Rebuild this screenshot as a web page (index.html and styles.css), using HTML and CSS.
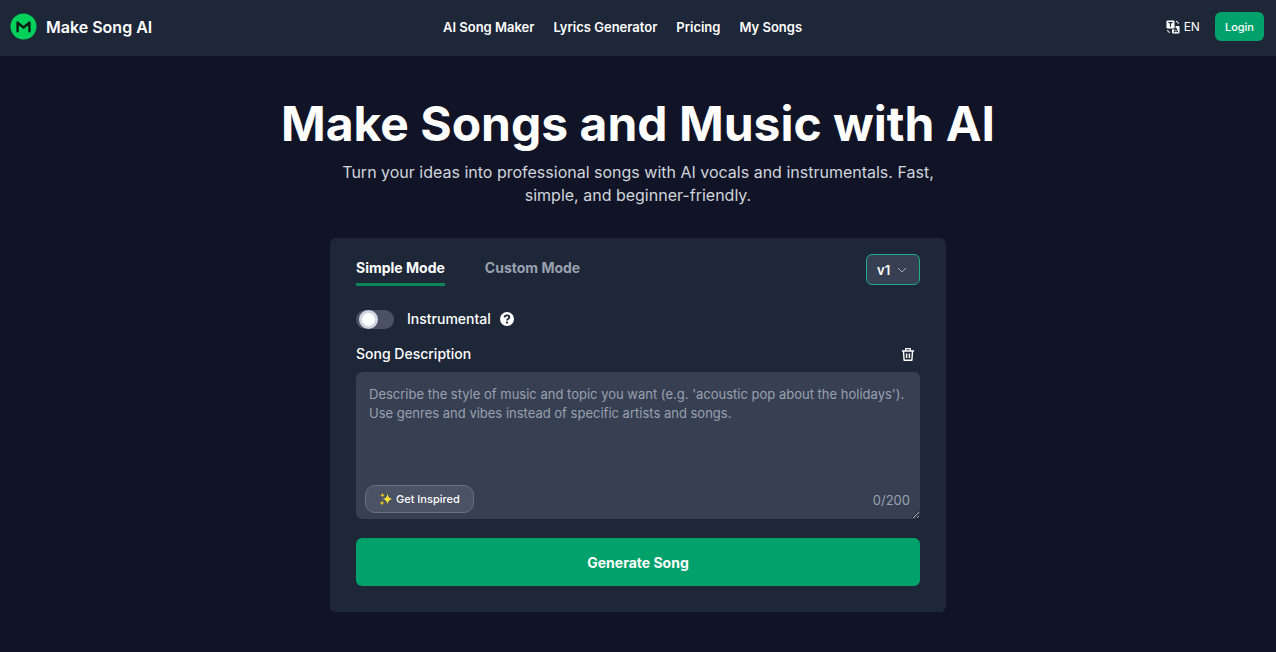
FILE: index.html
```html
<!DOCTYPE html>
<html lang="en">
<head>
    <meta charset="UTF-8">
    <meta name="viewport" content="width=device-width, initial-scale=1.0">
    <title>Make Song AI</title>
    <link rel="stylesheet" href="styles.css">
</head>
<body>
    <header class="header">
        <a href="#" class="brand">
            <svg class="brand-logo" viewBox="0 0 26 26" aria-hidden="true">
                <circle cx="13" cy="13" r="12.5" fill="#00d15a"/>
                <path d="M7.3 17.6V9.2L13 14l5.7-4.8v8.4" fill="none" stroke="#0b1d17" stroke-width="2.3" stroke-linecap="round" stroke-linejoin="round"/>
            </svg>
            <span>Make Song AI</span>
        </a>
        <nav class="nav">
            <a href="#">AI Song Maker</a>
            <a href="#">Lyrics Generator</a>
            <a href="#">Pricing</a>
            <a href="#">My Songs</a>
        </nav>
        <div class="header-actions">
            <button type="button" class="lang-btn">
                <svg class="lang-icon" viewBox="0 0 14 14" aria-hidden="true">
                    <rect x="0.5" y="0.5" width="8" height="8" rx="0.8" fill="#fff"/>
                    <path d="M2.4 2.6h4.2M4.5 2.6v4.2" stroke="#1e2738" stroke-width="1.2" fill="none"/>
                    <path d="M9.6 6h3.1a.8.8 0 0 1 .8.8v5.9a.8.8 0 0 1-.8.8H6.8a.8.8 0 0 1-.8-.8V9.6h3.6z" fill="#fff"/>
                    <path d="M8 12.4l1.9-4.4 1.9 4.4M8.7 11.2h2.4" stroke="#1e2738" stroke-width="1" fill="none"/>
                    <path d="M10 1.4Q12.4 1.4 12.4 3.8M1.6 10Q1.6 12.4 4 12.4" stroke="#fff" stroke-width="1" fill="none"/>
                </svg>
                <span>EN</span>
            </button>
            <button type="button" class="login-btn">Login</button>
        </div>
    </header>

    <main class="main">
        <h1>Make Songs and Music with AI</h1>
        <p class="subtitle">Turn your ideas into professional songs with AI vocals and instrumentals. Fast, simple, and beginner-friendly.</p>

        <form class="card">
            <div class="card-top">
                <div class="tabs">
                    <button type="button" class="tab active">Simple Mode</button>
                    <button type="button" class="tab">Custom Mode</button>
                </div>
                <div class="version">
                    <select class="version-select" aria-label="Version">
                        <option>v1</option>
                    </select>
                    <svg class="version-arrow" viewBox="0 0 10 10" aria-hidden="true">
                        <path d="M1 3l4 4 4-4" fill="none" stroke="#a3a9b5" stroke-width="1"/>
                    </svg>
                </div>
            </div>

            <div class="toggle-row">
                <input type="checkbox" id="instrumental" class="toggle">
                <label for="instrumental">Instrumental</label>
                <svg class="help-icon" viewBox="0 0 14 14" aria-hidden="true">
                    <circle cx="7" cy="7" r="7" fill="#fff"/>
                    <path d="M4.6 5.4C4.6 4 5.7 3.3 7 3.3S9.4 4 9.4 5.3C9.4 6.7 7 6.8 7 8.4" fill="none" stroke="#1e2738" stroke-width="1.8"/>
                    <circle cx="7" cy="10.6" r="1.1" fill="#1e2738"/>
                </svg>
            </div>

            <div class="label-row">
                <label for="description">Song Description</label>
                <button type="button" class="clear-btn" aria-label="Clear description">
                    <svg viewBox="0 0 14 14" aria-hidden="true">
                        <path d="M1 4h12M4.7 3.8V1.6h4.6v2.2M2.5 4.2l.6 9.1h7.8l.6-9.1M5.6 6.4v4.6M8.4 6.4v4.6" fill="none" stroke="#fff" stroke-width="1.4" stroke-linejoin="round"/>
                    </svg>
                </button>
            </div>

            <div class="description-box">
                <textarea id="description" maxlength="200" placeholder="Describe the style of music and topic you want (e.g. 'acoustic pop about the holidays'). Use genres and vibes instead of specific artists and songs."></textarea>
                <button type="button" class="inspire-btn">
                    <svg class="sparkles" viewBox="0 0 14 14" aria-hidden="true">
                        <path d="M8.5 1.5Q9 6.5 13.5 7Q9 7.5 8.5 12.5Q8 7.5 3.5 7Q8 6.5 8.5 1.5z" fill="#fde335"/>
                        <path d="M3.5.8Q3.7 3 5.7 3.2Q3.7 3.4 3.5 5.6Q3.3 3.4 1.3 3.2Q3.3 3 3.5.8z" fill="#f0c81a"/>
                        <path d="M3 8.5Q3.2 10.8 5.4 11Q3.2 11.2 3 13.5Q2.8 11.2.6 11Q2.8 10.8 3 8.5z" fill="#f0c81a"/>
                    </svg>
                    <span>Get Inspired</span>
                </button>
                <span class="counter">0/200</span>
            </div>

            <button type="button" class="generate-btn">Generate Song</button>
        </form>
    </main>

    <script>
        const description = document.getElementById("description");
        const counter = document.querySelector(".counter");

        description.addEventListener("input", () => {
            counter.textContent = `${description.value.length}/200`;
        });

        document.querySelector(".clear-btn").addEventListener("click", () => {
            description.value = "";
            counter.textContent = "0/200";
        });
    </script>
</body>
</html>
```
FILE: styles.css
```css
*,
*::before {
    box-sizing: border-box;
}

body {
    margin: 0;
    background-color: #101426;
    color: #fff;
    font-family: Inter, sans-serif;
    font-size: 13px;
    line-height: 20px;
}

button,
select,
textarea {
    font-family: inherit;
    color: inherit;
}

button {
    border: none;
    padding: 0;
    background: none;
    cursor: pointer;
}

a {
    color: inherit;
    text-decoration: none;
}

svg {
    display: block;
}

/* Header */
.header {
    display: grid;
    grid-template-columns: 1fr auto 1fr;
    align-items: center;
    min-height: 56px;
    padding: 0 12px 3px 10px;
    background: #1e2738;
}

.brand {
    display: flex;
    align-items: center;
    gap: 9px;
    font-size: 16px;
    font-weight: 600;
}

.brand-logo {
    width: 27px;
    height: 27px;
}

.nav {
    display: flex;
    gap: 19px;
    margin-right: 29px;
    font-weight: 600;
}

.header-actions {
    display: flex;
    align-items: center;
    justify-content: flex-end;
    gap: 15px;
}

.lang-btn {
    display: flex;
    align-items: center;
    gap: 4px;
    font-size: 12px;
}

.lang-icon {
    width: 14px;
    height: 14px;
}

.login-btn {
    height: 29px;
    padding: 0 10px;
    border-radius: 6px;
    background: #00a16a;
    font-size: 11px;
    font-weight: 500;
}

/* Hero */
.main {
    padding: 39px 20px 40px;
}

h1 {
    margin: 0;
    font-size: 48px;
    font-weight: 700;
    line-height: 58px;
    text-align: center;
}

.subtitle {
    max-width: 616px;
    margin: 8px auto 31px;
    color: #d1d5dc;
    font-size: 16px;
    line-height: 23px;
    text-align: center;
}

/* Song form */
.card {
    max-width: 616px;
    margin: 0 auto;
    padding: 16px 26px 26px;
    border-radius: 6px;
    background: #1e2738;
}

.card-top {
    display: flex;
    justify-content: space-between;
    align-items: flex-start;
}

.tabs {
    display: flex;
    gap: 40px;
}

.tab {
    height: 32px;
    padding-bottom: 2px;
    border-bottom: 3px solid transparent;
    color: #99a1af;
    font-size: 14px;
    font-weight: 700;
}

.tab.active {
    border-bottom-color: #0a855a;
    color: #fff;
}

.version {
    position: relative;
}

.version-select {
    display: block;
    width: 54px;
    height: 31px;
    padding: 0 10px;
    border: 1px solid #1fae85;
    border-radius: 6px;
    background: #374052;
    font-size: 13px;
    font-weight: 600;
    appearance: none;
}

.version-arrow {
    position: absolute;
    top: 11px;
    right: 13px;
    width: 10px;
    height: 10px;
    pointer-events: none;
}

.toggle-row {
    display: flex;
    align-items: center;
    margin-top: 23px;
    font-size: 14px;
    font-weight: 500;
}

.toggle {
    width: 38px;
    height: 19px;
    margin: 0 13px 0 0;
    padding: 0 3px;
    border-radius: 10px;
    background: #4a5163;
    appearance: none;
    cursor: pointer;
}

.toggle::before {
    content: "";
    display: block;
    width: 19px;
    height: 19px;
    border: 3px solid #d1d5e0;
    border-radius: 50%;
    background: #fff;
}

.toggle:checked {
    background: #00a16a;
}

.toggle:checked::before {
    margin-left: auto;
}

.help-icon {
    width: 14px;
    height: 14px;
    margin-left: 9px;
}

.label-row {
    display: flex;
    justify-content: space-between;
    align-items: center;
    margin: 15px 5px 8px 0;
    font-size: 14px;
    font-weight: 500;
}

.clear-btn svg {
    width: 14px;
    height: 14px;
}

.description-box {
    position: relative;
}

textarea {
    display: block;
    width: 100%;
    height: 147px;
    padding: 13px 13px 40px;
    border: none;
    border-radius: 6px;
    background: #374052;
    font-size: 13px;
    line-height: 19px;
    resize: vertical;
}

textarea::placeholder {
    color: #99a1af;
}

.inspire-btn {
    position: absolute;
    left: 9px;
    bottom: 6px;
    display: flex;
    align-items: center;
    gap: 3px;
    height: 28px;
    padding: 0 13px;
    border: 1px solid #697180;
    border-radius: 10px;
    background: #4a5263;
    font-size: 11px;
    font-weight: 500;
}

.sparkles {
    width: 14px;
    height: 14px;
}

.counter {
    position: absolute;
    right: 10px;
    bottom: 9px;
    color: #99a1af;
}

.generate-btn {
    display: block;
    width: 100%;
    height: 48px;
    margin-top: 19px;
    border-radius: 6px;
    background: #00a16a;
    font-size: 14px;
    font-weight: 700;
}
```
